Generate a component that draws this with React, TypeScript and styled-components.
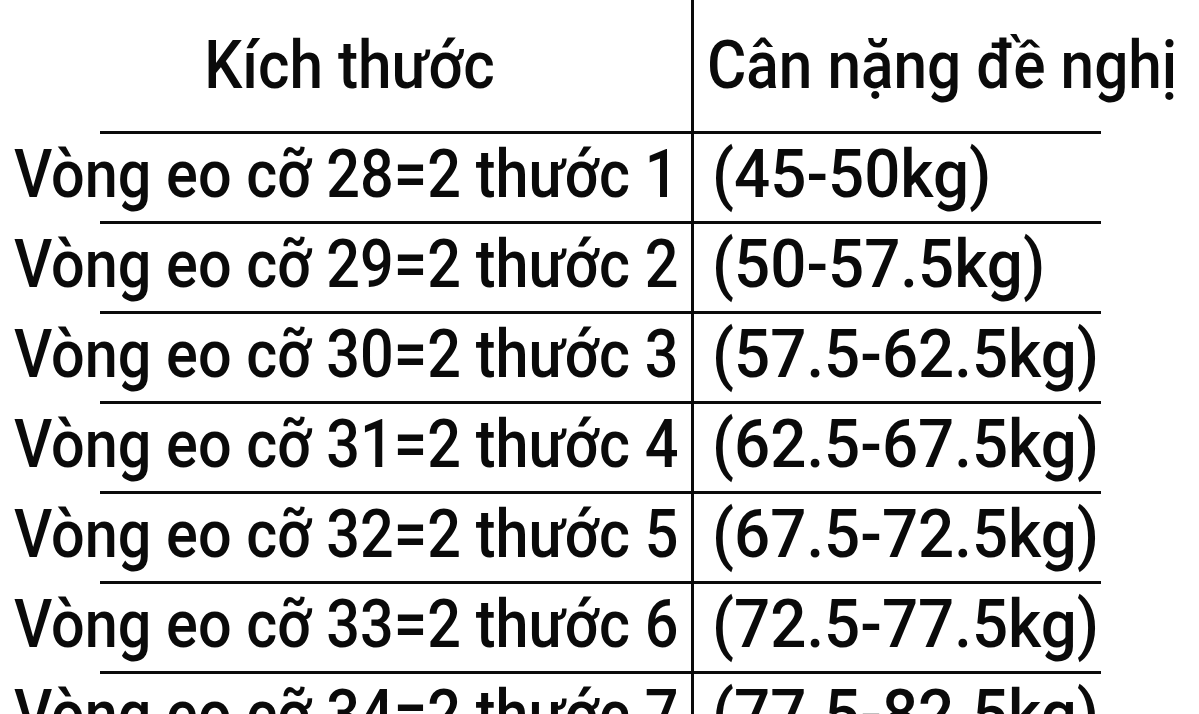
import React from "react";
import styled, { createGlobalStyle } from "styled-components";

const GlobalStyle = createGlobalStyle`
  html, body {
    margin: 0;
    padding: 0;
    background: #ffffff;
  }
  body {
    font-family: Roboto, "Noto Sans", "Liberation Sans", sans-serif;
    color: #0a0a0a;
    overflow: hidden;
  }
`;

const Table = styled.div`
  width: 1199px;
  height: 714px;
  overflow: hidden;
  display: flex;
  flex-direction: column;
`;

const Row = styled.div<{ $height: number }>`
  flex: 0 0 auto;
  height: ${(p) => p.$height}px;
  display: grid;
  grid-template-columns: 694px 1fr;
  background-image: linear-gradient(#0a0a0a, #0a0a0a);
  background-repeat: no-repeat;
  background-size: 1001px 3px;
  background-position: 100px 100%;
`;

const Cell = styled.div<{ $head?: boolean; $left?: boolean }>`
  display: flex;
  align-items: flex-start;
  justify-content: ${(p) => (p.$head && p.$left ? "center" : "flex-start")};
  padding-top: ${(p) => (p.$head ? "32px" : "7px")};
  padding-left: ${(p) => (p.$left ? (p.$head ? "8px" : "14px") : p.$head ? "13px" : "18px")};
  border-right: ${(p) => (p.$left ? "3px solid #0a0a0a" : "none")};
  overflow: visible;
`;

const Text = styled.span<{ $center?: boolean; $scale: number }>`
  display: inline-block;
  font-size: 67px;
  font-weight: 500;
  line-height: 1;
  white-space: nowrap;
  transform: scaleX(${(p) => p.$scale});
  transform-origin: ${(p) => (p.$center ? "center" : "left")} center;
`;

const rows = [
  ["Vòng eo cỡ 28=2 thước 1", "(45-50kg)"],
  ["Vòng eo cỡ 29=2 thước 2", "(50-57.5kg)"],
  ["Vòng eo cỡ 30=2 thước 3", "(57.5-62.5kg)"],
  ["Vòng eo cỡ 31=2 thước 4", "(62.5-67.5kg)"],
  ["Vòng eo cỡ 32=2 thước 5", "(67.5-72.5kg)"],
  ["Vòng eo cỡ 33=2 thước 6", "(72.5-77.5kg)"],
  ["Vòng eo cỡ 34=2 thước 7", "(77.5-82.5kg)"],
];

const App = () => {
  return (
    <>
      <GlobalStyle />
      <Table>
        <Row $height={134}>
          <Cell $head $left>
            <Text $center $scale={0.9}>
              Kích thước
            </Text>
          </Cell>
          <Cell $head>
            <Text $scale={0.9}>Cân nặng đề nghị</Text>
          </Cell>
        </Row>
        {rows.map(([size, weight]) => (
          <Row key={size} $height={90}>
            <Cell $left>
              <Text $scale={0.886}>{size}</Text>
            </Cell>
            <Cell>
              <Text $scale={0.95}>{weight}</Text>
            </Cell>
          </Row>
        ))}
      </Table>
    </>
  );
};

export default App;
